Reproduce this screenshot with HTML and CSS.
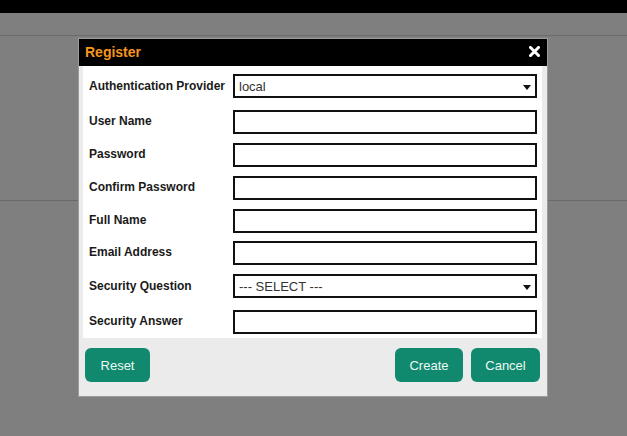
FILE: index.html
```html
<!DOCTYPE html>
<html>
<head>
<meta charset="utf-8">
<link rel="stylesheet" href="styles.css">
</head>
<body>
<div class="page">
  <div class="topbar"></div>
  <div class="subbar"></div>
  <div class="content"></div>
</div>
<div class="dialog">
  <div class="dlg-head">
    <span class="dlg-title">Register</span>
    <svg class="close" width="11" height="11" viewBox="0 0 11 11"><path d="M1.5 1.5 L9.5 9.5 M9.5 1.5 L1.5 9.5" stroke="#fff" stroke-width="3" stroke-linecap="square"/></svg>
  </div>
  <div class="dlg-body">
    <div class="panel">
      <div class="row row-sel"><label class="lbl">Authentication Provider</label><div class="select"><span>local</span><svg width="8" height="5" viewBox="0 0 8 5"><path d="M0 0 H8 L4 5 Z" fill="#111"/></svg></div></div>
      <div class="row"><label class="lbl">User Name</label><input class="inp" type="text"></div>
      <div class="row"><label class="lbl">Password</label><input class="inp" type="password"></div>
      <div class="row"><label class="lbl">Confirm Password</label><input class="inp" type="password"></div>
      <div class="row row-tight"><label class="lbl">Full Name</label><input class="inp" type="text"></div>
      <div class="row"><label class="lbl">Email Address</label><input class="inp" type="text"></div>
      <div class="row row-sel"><label class="lbl">Security Question</label><div class="select"><span>--- SELECT ---</span><svg width="8" height="5" viewBox="0 0 8 5"><path d="M0 0 H8 L4 5 Z" fill="#111"/></svg></div></div>
      <div class="row"><label class="lbl">Security Answer</label><input class="inp" type="text"></div>
    </div>
    <div class="footer">
      <button class="btn btn-reset">Reset</button>
      <div class="spacer"></div>
      <button class="btn btn-create">Create</button>
      <button class="btn btn-cancel">Cancel</button>
    </div>
  </div>
</div>
</body>
</html>
```
FILE: styles.css
```css
html, body {
  margin: 0;
  padding: 0;
}
body {
  width: 627px;
  height: 436px;
  overflow: hidden;
  background: #7f7f7f;
  font-family: "Liberation Sans", Arial, sans-serif;
  position: relative;
}
.topbar {
  height: 13px;
  background: #000;
}
.subbar {
  height: 22px;
  border-bottom: 1px solid #6a6a6a;
}
.content {
  height: 164px;
  border-bottom: 1px solid #6a6a6a;
}
.dialog {
  position: absolute;
  left: 78px;
  top: 38px;
  width: 468px;
  height: 357px;
  border: 1px solid #9c9c9c;
  background: #ebebeb;
  display: flex;
  flex-direction: column;
}
.dlg-head {
  height: 27px;
  background: #000;
  display: flex;
  align-items: center;
  padding: 0 7px 0 6px;
}
.dlg-title {
  color: #f5961e;
  font-weight: bold;
  font-size: 14px;
  flex: 1;
  margin-top: -1px;
}
.close {
  display: block;
  margin-top: -2px;
}
.dlg-body {
  flex: 1;
  padding: 0 5px 0 4px;
  display: flex;
  flex-direction: column;
}
.panel {
  background: #fff;
  height: 272px;
  box-sizing: border-box;
  padding: 8px 5px 0 6px;
}
.row {
  display: flex;
  align-items: center;
  height: 24px;
  margin-bottom: 9px;
}
.row-sel {
  margin-bottom: 12px;
}
.row-tight {
  margin-bottom: 8px;
}
.lbl {
  width: 144px;
  font-size: 12px;
  font-weight: bold;
  color: #1a1a1a;
  padding-bottom: 3px;
}
.row-sel .lbl {
  padding-bottom: 1px;
}
.inp, .select {
  flex: 1;
  height: 24px;
  box-sizing: border-box;
  border: 2px solid #111;
  margin: 0;
  background: #fff;
}
.select {
  display: flex;
  align-items: center;
  padding: 0 4px 0 4px;
  font-size: 13px;
  color: #333;
}
.select span {
  flex: 1;
}
.select svg {
  display: block;
  margin-top: 2px;
}
.footer {
  display: flex;
  padding: 10px 2px 0 2px;
  gap: 8px;
}
.spacer {
  flex: 1;
}
.btn {
  height: 34px;
  border: none;
  border-radius: 6px;
  background: #10896f;
  color: #eef8f4;
  font-family: "Liberation Sans", Arial, sans-serif;
  font-size: 13px;
  padding: 0;
}
.btn-reset { width: 65px; }
.btn-create { width: 68px; }
.btn-cancel { width: 69px; }
```
